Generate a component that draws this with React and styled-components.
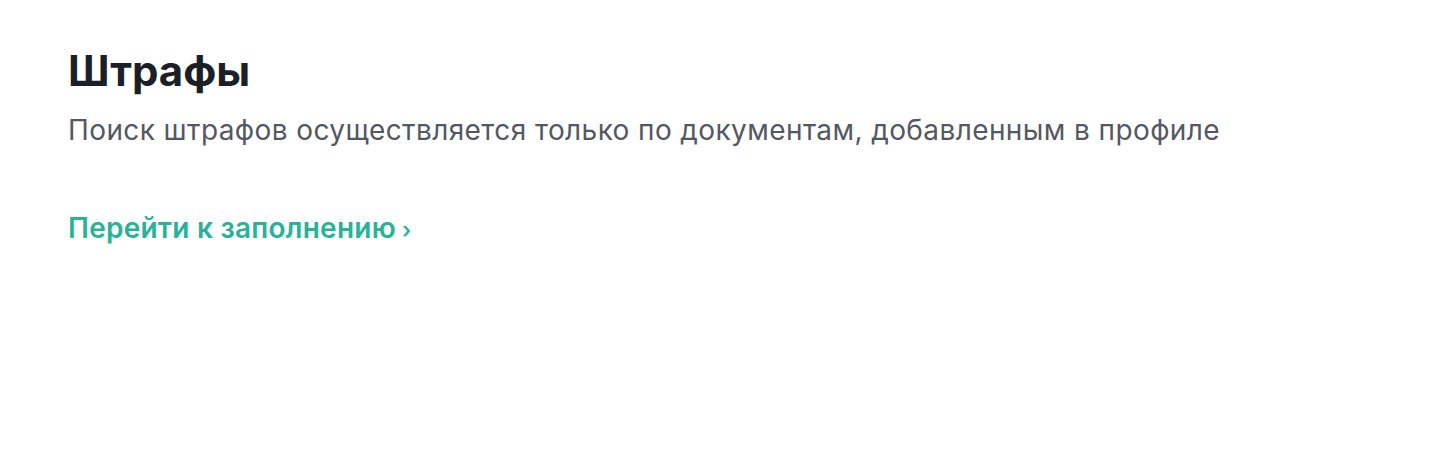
import React from "react";
import styled, { createGlobalStyle } from "styled-components";

const Global = createGlobalStyle`
  html, body { margin: 0; padding: 0; background: #ffffff; }
  body { font-family: Inter, "Noto Sans", sans-serif; -webkit-font-smoothing: antialiased; }
`;

const Section = styled.section`
  display: flex;
  flex-direction: column;
  align-items: flex-start;
  padding: 45px 68px;
`;

const Title = styled.h1`
  margin: 0;
  font-size: 42px;
  line-height: 52px;
  font-weight: 700;
  color: #1b1f27;
`;

const Subtitle = styled.p`
  margin: 15px 0 0;
  font-size: 28px;
  line-height: 36px;
  font-weight: 400;
  letter-spacing: 0.4px;
  color: #545862;
`;

const Link = styled.a`
  display: inline-flex;
  align-items: center;
  gap: 6px;
  margin-top: 62px;
  font-size: 28px;
  line-height: 36px;
  font-weight: 600;
  letter-spacing: 0.25px;
  color: #28b399;
  text-decoration: none;
  cursor: pointer;
`;

const Chevron = styled.span`
  font-size: 22px;
  line-height: 1;
  font-weight: 600;
  transform: translateY(2px);
`;

export default function App() {
  return (
    <>
      <Global />
      <Section>
        <Title>Штрафы</Title>
        <Subtitle>Поиск штрафов осуществляется только по документам, добавленным в профиле</Subtitle>
        <Link href="#">
          Перейти к заполнению
          <Chevron>›</Chevron>
        </Link>
      </Section>
    </>
  );
}
